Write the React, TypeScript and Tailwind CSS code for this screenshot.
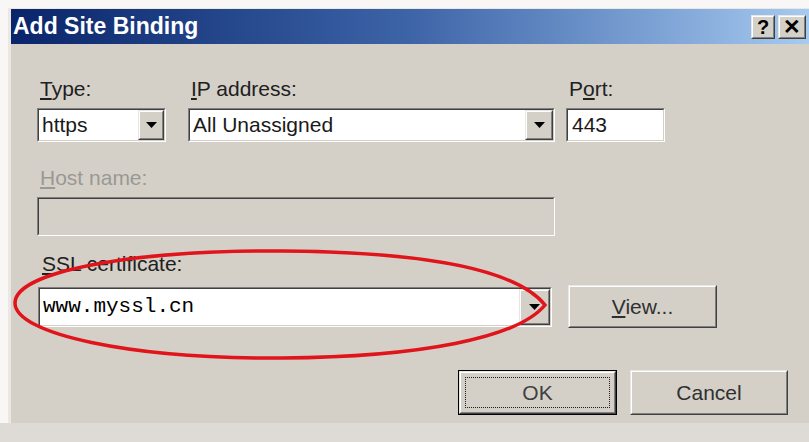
import type { ReactNode } from "react";

const ui = { fontFamily: '"Liberation Sans", Arial, sans-serif' };
const mono = { fontFamily: '"Liberation Mono", "Courier New", monospace' };

// Classic sunken 3D edge used by text boxes and combo boxes
function Sunken({ className, children }: { className: string; children?: ReactNode }) {
  return (
    <div
      className={`border border-t-[#808080] border-l-[#808080] border-b-white border-r-white ${className}`}
    >
      <div className="h-full w-full border border-t-[#404040] border-l-[#404040] border-b-[#d4d0c8] border-r-[#d4d0c8] flex">
        {children}
      </div>
    </div>
  );
}

// Raised 3D edge used by buttons
function Raised({ className, children }: { className: string; children?: ReactNode }) {
  return (
    <div
      className={`border border-t-[#e8e6e2] border-l-[#e8e6e2] border-b-[#404040] border-r-[#404040] bg-[#d4d0c8] ${className}`}
    >
      <div className="h-full w-full border border-t-white border-l-white border-b-[#808080] border-r-[#808080] flex items-center justify-center">
        {children}
      </div>
    </div>
  );
}

function DropArrow() {
  return (
    <svg width="11" height="6" viewBox="0 0 11 6">
      <path d="M0 0h11L5.5 6z" fill="#000" />
    </svg>
  );
}

function Combo({ width, value, font, drop }: { width: string; value: string; font?: "mono"; drop: string }) {
  return (
    <Sunken className={`${width} h-full bg-white`}>
      <div
        className={`flex-1 flex items-center pl-[3px] text-[21px] ${font === "mono" ? "text-black" : "text-[#1a1a1a]"}`}
        style={font === "mono" ? mono : ui}
      >
        {value}
      </div>
      <Raised className={`${drop} h-full`}>
        <DropArrow />
      </Raised>
    </Sunken>
  );
}

function Label({ children, muted }: { children: ReactNode; muted?: boolean }) {
  return (
    <div
      className={`h-[24px] leading-[24px] pl-[3px] text-[21px] ${muted ? "text-[#9a9894]" : "text-[#202020]"}`}
      style={ui}
    >
      {children}
    </div>
  );
}

export default function App() {
  return (
    <div className="w-[809px] h-[442px] overflow-hidden bg-[#f8f7f5] pt-[8px] pl-[8px]">
      <div className="w-[801px] h-[415px] border-l-[3px] border-t border-[#ebe8e4] bg-[#d4d0c8] flex flex-col">
        {/* Title bar */}
        <div className="h-[35px] shrink-0 flex items-center bg-gradient-to-r from-[#0a246a] via-[#3e64a8] to-[#a6caf0] pl-[2px] pr-[3px]">
          <span className="flex-1 text-white font-bold text-[23px] leading-none" style={ui}>
            Add Site Binding
          </span>
          <Raised className="w-[24px] h-[24px]">
            <span className="font-bold text-[20px] leading-none text-black" style={ui}>
              ?
            </span>
          </Raised>
          <Raised className="w-[28px] h-[24px] ml-[3px]">
            <span className="font-bold text-[21px] leading-none text-black" style={ui}>
              ✕
            </span>
          </Raised>
        </div>

        {/* Form body */}
        <div className="relative flex-1 flex flex-col pl-[26px] pr-[21px]">
          <div className="flex mt-[33px]">
            <div className="w-[129px]">
              <Label>
                <span className="underline">T</span>ype:
              </Label>
            </div>
            <div className="w-[367px] ml-[22px]">
              <Label>
                <span className="underline">I</span>P address:
              </Label>
            </div>
            <div className="ml-[11px]">
              <Label>
                P<span className="underline">o</span>rt:
              </Label>
            </div>
          </div>
          <div className="flex h-[34px] mt-[7px]">
            <Combo width="w-[129px]" value="https" drop="w-[26px]" />
            <div className="ml-[22px] h-full">
              <Combo width="w-[367px]" value="All Unassigned" drop="w-[28px]" />
            </div>
            <Sunken className="w-[99px] h-full bg-white ml-[11px]">
              <div className="flex items-center pl-[4px] text-[21px] text-[#1a1a1a]" style={ui}>
                443
              </div>
            </Sunken>
          </div>

          <div className="mt-[24px]">
            <Label muted>
              <span className="underline">H</span>ost name:
            </Label>
          </div>
          <Sunken className="w-[518px] h-[39px] mt-[7px] bg-[#d4d0c8]" />

          <div className="mt-[16px] pl-[2px]">
            <Label>
              <span className="underline">S</span>SL certificate:
            </Label>
          </div>
          <div className="flex items-center h-[43px] mt-[9px] pl-[1px]">
            <div className="h-[40px]">
              <Combo width="w-[514px]" value="www.myssl.cn" font="mono" drop="w-[31px]" />
            </div>
            <Raised className="w-[149px] h-[43px] ml-[16px]">
              <span className="text-[21px] text-[#303030]" style={ui}>
                <span className="underline">V</span>iew...
              </span>
            </Raised>
          </div>

          <div className="flex justify-end gap-[13px] mt-[42px]">
            <div className="w-[159px] h-[45px] border border-black">
              <Raised className="w-full h-full">
                <div className="w-[145px] h-[31px] border border-dotted border-[#202020] flex items-center justify-center">
                  <span className="text-[21px] text-[#404040]" style={ui}>
                    OK
                  </span>
                </div>
              </Raised>
            </div>
            <Raised className="w-[158px] h-[45px]">
              <span className="text-[21px] text-[#303030]" style={ui}>
                Cancel
              </span>
            </Raised>
          </div>

          {/* Red hand-drawn ring around the certificate picker */}
          <svg
            className="absolute left-[-11px] top-[-44px] pointer-events-none"
            width="809"
            height="442"
            viewBox="0 0 809 442"
          >
            <path
              d="M15 303 C15 272 130 250 282 251 C420 252 515 268 545 305 C518 338 420 357 282 358 C130 359 15 334 15 303 Z"
              fill="none"
              stroke="#e0141a"
              strokeWidth="3.5"
            />
          </svg>
        </div>
      </div>
      <div className="h-[20px] bg-[#dedad6] -ml-[8px]" />
    </div>
  );
}
